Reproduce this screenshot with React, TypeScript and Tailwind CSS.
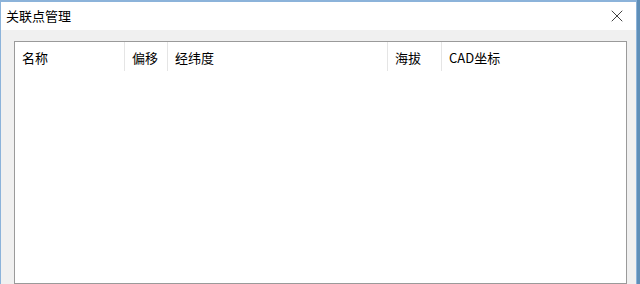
import { X } from "lucide-react";

const columns = [
  { label: "名称", width: "w-[110px]" },
  { label: "偏移", width: "w-[43px]" },
  { label: "经纬度", width: "w-[220px]" },
  { label: "海拔", width: "w-[54px]" },
  { label: "CAD坐标", width: "w-[90px]" },
];

const App = () => {
  return (
    <div className="w-[640px] h-[284px] bg-[#5f8fb8] overflow-hidden flex">
      <div
        className="w-[637px] h-full flex flex-col bg-[#f0f0f0] border-l border-t-2 border-r border-[#8cb3da] text-[13px] text-black"
        style={{ fontFamily: '"Noto Sans CJK SC", "Microsoft YaHei", sans-serif' }}
      >
        <div className="h-[28px] bg-white flex items-center justify-between pl-[5px] pr-[9px] shrink-0">
          <span className="leading-none -mt-[2px]">关联点管理</span>
          <X size={20} strokeWidth={1} className="text-[#1a1a1a] -mt-[1px]" />
        </div>
        <div className="flex-1 pt-[11px] pl-[13px] pr-[9px]">
          <div className="h-full border border-[#9a9a9a] bg-white">
            <div className="flex h-[29px]">
              {columns.map((col) => (
                <div
                  key={col.label}
                  className={`${col.width} h-full flex items-center pl-[7px] border-r border-[#e5e5e5] last:border-r-0`}
                >
                  <span className="leading-none mt-[1px]">{col.label}</span>
                </div>
              ))}
            </div>
          </div>
        </div>
      </div>
    </div>
  );
};

export default App;
